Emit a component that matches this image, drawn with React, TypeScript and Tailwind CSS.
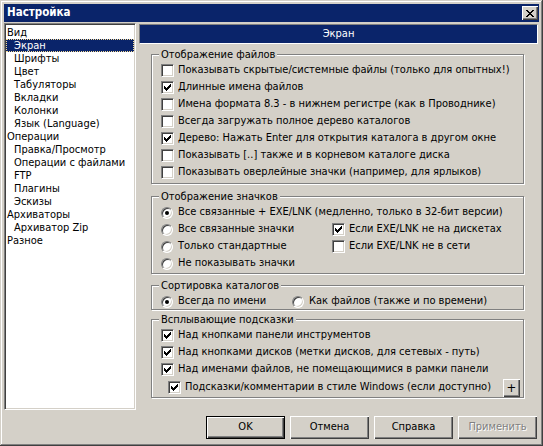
import React from 'react';

const FONT = "font-['DejaVu_Sans_Condensed','Liberation_Sans',sans-serif]";

const tree = [
  { label: 'Вид', level: 0 },
  { label: 'Экран', level: 1, selected: true },
  { label: 'Шрифты', level: 1 },
  { label: 'Цвет', level: 1 },
  { label: 'Табуляторы', level: 1 },
  { label: 'Вкладки', level: 1 },
  { label: 'Колонки', level: 1 },
  { label: 'Язык (Language)', level: 1 },
  { label: 'Операции', level: 0 },
  { label: 'Правка/Просмотр', level: 1 },
  { label: 'Операции с файлами', level: 1 },
  { label: 'FTP', level: 1 },
  { label: 'Плагины', level: 1 },
  { label: 'Эскизы', level: 1 },
  { label: 'Архиваторы', level: 0 },
  { label: 'Архиватор Zip', level: 1 },
  { label: 'Разное', level: 0 },
];

const CHECK = ['......X', '.....XX', 'X...XXX', 'XX.XXX.', 'XXXXX..', '.XXX...', '..X....'];

function Check({ checked }: { checked?: boolean }) {
  return (
    <span className="w-[13px] h-[13px] shrink-0 bg-white border border-[#808080] border-r-white border-b-white shadow-[inset_1px_1px_#404040,inset_-1px_-1px_#d4d0c8] flex items-center justify-center">
      {checked && (
        <svg width="7" height="7" viewBox="0 0 7 7" shapeRendering="crispEdges">
          {CHECK.flatMap((row, y) =>
            row.split('').map((c, x) => (c === 'X' ? <rect key={`${x}-${y}`} x={x} y={y} width="1" height="1" fill="#000" /> : null))
          )}
        </svg>
      )}
    </span>
  );
}

function Radio({ checked }: { checked?: boolean }) {
  return (
    <span className="w-[12px] h-[12px] shrink-0 rounded-full bg-white border border-[#808080] border-r-white border-b-white shadow-[inset_1px_1px_#404040,inset_-1px_-1px_#d4d0c8] flex items-center justify-center">
      {checked && <span className="w-[4px] h-[4px] rounded-full bg-black" />}
    </span>
  );
}

function Group({ title, className = '', children }: { title: string; className?: string; children: React.ReactNode }) {
  return (
    <div className={`border border-[#808080] shadow-[1px_1px_0_#fff,inset_1px_1px_0_#fff] ${className}`}>
      <div className="-mt-[7px] ml-[7px] w-fit px-[2px] h-[13px] leading-[13px] bg-[#d4d0c8]">{title}</div>
      {children}
    </div>
  );
}

function CheckRow({ label, checked, indent = false }: { label: string; checked?: boolean; indent?: boolean }) {
  return (
    <div className={`h-[17px] flex items-center gap-[4px] ${indent ? 'pl-[16px]' : 'pl-[9px]'}`}>
      <Check checked={checked} />
      <span className="whitespace-nowrap">{label}</span>
    </div>
  );
}

function RadioRow({ label, checked }: { label: string; checked?: boolean }) {
  return (
    <div className="h-[17px] flex items-center gap-[5px] pl-[9px]">
      <Radio checked={checked} />
      <span className="whitespace-nowrap">{label}</span>
    </div>
  );
}

function Button({ label, isDefault, disabled }: { label: string; isDefault?: boolean; disabled?: boolean }) {
  const frame = isDefault
    ? 'border border-black shadow-[inset_1px_1px_#fff,inset_-1px_-1px_#404040,inset_-2px_-2px_#808080]'
    : 'shadow-[inset_1px_1px_#fff,inset_-1px_-1px_#404040,inset_-2px_-2px_#808080]';
  return (
    <button
      className={`w-[79px] h-[23px] bg-[#d4d0c8] flex items-center justify-center ${frame} ${
        disabled ? 'text-[#808080] [text-shadow:1px_1px_0_#fff]' : 'text-black'
      }`}
    >
      {label}
    </button>
  );
}

export default function App() {
  return (
    <div
      className={`w-[543px] h-[446px] bg-[#d4d0c8] p-[4px] flex flex-col text-[11px] text-black ${FONT} shadow-[inset_-1px_-1px_#404040,inset_1px_1px_#d4d0c8,inset_-2px_-2px_#808080,inset_2px_2px_#fff]`}
    >
      {/* title bar */}
      <div className="h-[18px] bg-[#0a246a] flex items-center justify-between pl-[3px] pr-[1px]">
        <span className="text-white font-bold text-[11.5px] leading-none">Настройка</span>
        <button className="w-[16px] h-[14px] bg-[#d4d0c8] flex items-center justify-center shadow-[inset_1px_1px_#fff,inset_-1px_-1px_#404040,inset_-2px_-2px_#808080]">
          <svg width="8" height="7" viewBox="0 0 8 7" shapeRendering="crispEdges">
            <path d="M0 0h2v1h1v1h2v-1h1v-1h2v1h-1v1h-1v1h-1v1h1v1h1v1h1v1h-2v-1h-1v-1h-2v1h-1v1h-2v-1h1v-1h1v-1h1v-1h-1v-1h-1v-1h-1z" fill="#000" />
          </svg>
        </button>
      </div>

      <div className="flex gap-[3px] pt-[1px] flex-1">
        {/* tree list */}
        <div className="w-[132px] h-[387px] bg-white border border-[#808080] border-r-white border-b-white shadow-[inset_1px_1px_#404040,inset_-1px_-1px_#d4d0c8] px-[1px] pt-[2px]">
          {tree.map((item) => (
            <div
              key={item.label}
              className={`h-[13px] leading-[11px] whitespace-nowrap ${item.level ? 'pl-[7px]' : 'pl-0'} ${
                item.selected ? 'bg-[#0a246a] text-white border border-dotted border-[#f5db95]' : 'border border-transparent'
              }`}
            >
              {item.label}
            </div>
          ))}
        </div>

        {/* right panel */}
        <div className="w-[399px] flex flex-col pt-[1px]">
          <div className="h-[20px] bg-[#0a246a] text-white flex items-center justify-center border border-[#808080] border-r-white border-b-white">
            Экран
          </div>

          <div className="ml-[12px] w-[373px] flex flex-col">
            <Group title="Отображение файлов" className="mt-[10px] pb-[2px]">
              <div className="mt-[1px]">
                <CheckRow label="Показывать скрытые/системные файлы (только для опытных!)" />
                <CheckRow label="Длинные имена файлов" checked />
                <CheckRow label="Имена формата 8.3 - в нижнем регистре (как в Проводнике)" />
                <CheckRow label="Всегда загружать полное дерево каталогов" />
                <CheckRow label="Дерево: Нажать Enter для открытия каталога в другом окне" checked />
                <CheckRow label="Показывать [..] также и в корневом каталоге диска" />
                <CheckRow label="Показывать оверлейные значки (например, для ярлыков)" />
              </div>
            </Group>

            <Group title="Отображение значков" className="mt-[12px] pb-[1px]">
              <div className="mt-[1px]">
                <RadioRow label="Все связанные + EXE/LNK (медленно, только в 32-бит версии)" checked />
                <div className="flex">
                  <div className="w-[171px]">
                    <RadioRow label="Все связанные значки" />
                    <RadioRow label="Только стандартные" />
                    <RadioRow label="Не показывать значки" />
                  </div>
                  <div>
                    <CheckRow label="Если EXE/LNK не на дискетах" checked />
                    <CheckRow label="Если EXE/LNK не в сети" />
                  </div>
                </div>
              </div>
            </Group>

            <Group title="Сортировка каталогов" className="mt-[11px]">
              <div className="mt-[1px] flex h-[16px]">
                <div className="w-[131px]">
                  <RadioRow label="Всегда по имени" checked />
                </div>
                <RadioRow label="Как файлов (также и по времени)" />
              </div>
            </Group>

            <Group title="Всплывающие подсказки" className="mt-[9px]">
              <div className="mt-[1px]">
                <CheckRow label="Над кнопками панели инструментов" checked />
                <CheckRow label="Над кнопками дисков (метки дисков, для сетевых - путь)" checked />
                <CheckRow label="Над именами файлов, не помещающимися в рамки панели" checked />
                <div className="h-[19px] flex items-center pr-[3px]">
                  <div className="flex-1">
                    <CheckRow label="Подсказки/комментарии в стиле Windows (если доступно)" checked indent />
                  </div>
                  <button className="w-[17px] h-[18px] bg-[#d4d0c8] flex items-center justify-center text-[13px] shadow-[inset_1px_1px_#fff,inset_-1px_-1px_#404040,inset_-2px_-2px_#808080]">
                    +
                  </button>
                </div>
              </div>
            </Group>
          </div>

          <div className="mt-[18px] flex justify-end gap-[5px] pr-[1px]">
            <Button label="OK" isDefault />
            <Button label="Отмена" />
            <Button label="Справка" />
            <Button label="Применить" disabled />
          </div>
        </div>
      </div>
    </div>
  );
}
